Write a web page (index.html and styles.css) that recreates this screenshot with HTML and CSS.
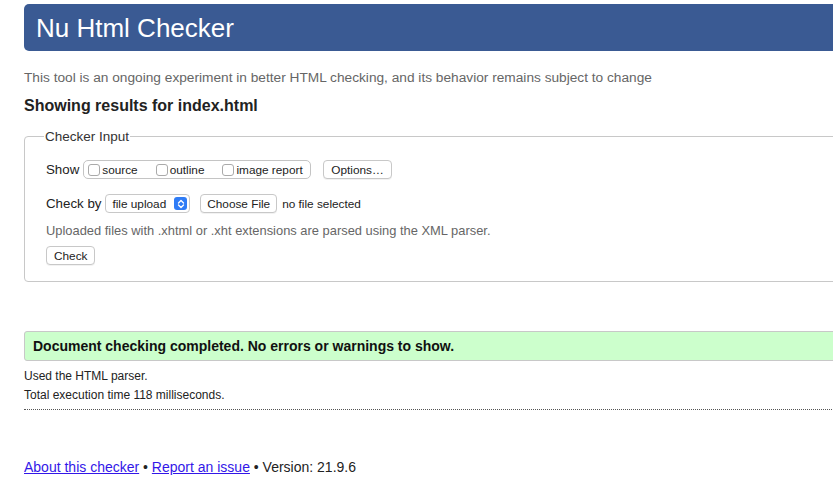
FILE: index.html
```html
<!DOCTYPE html>
<html lang="en">
<head>
<meta charset="utf-8">
<title>Nu Html Checker</title>
<link rel="stylesheet" href="styles.css">
</head>
<body>
<div class="page">
  <h1 class="banner">Nu Html Checker</h1>
  <p class="intro">This tool is an ongoing experiment in better HTML checking, and its behavior remains subject to change</p>
  <h2 class="results-for">Showing results for index.html</h2>
  <fieldset class="checker">
    <legend>Checker Input</legend>
    <div class="row show-row">
      <span class="label">Show</span>
      <span class="group">
        <label class="opt"><span class="box"></span>source</label>
        <label class="opt"><span class="box"></span>outline</label>
        <label class="opt"><span class="box"></span>image report</label>
      </span>
      <span class="btn">Options…</span>
    </div>
    <div class="row by-row">
      <span class="label">Check by</span>
      <span class="select">file upload<span class="arrows"><svg width="8" height="10" viewBox="0 0 8 10"><path d="M1.5 4 L4 1.5 L6.5 4 M1.5 6 L4 8.5 L6.5 6" fill="none" stroke="#fff" stroke-width="1.4" stroke-linecap="round" stroke-linejoin="round"/></svg></span></span>
      <span class="btn file-btn">Choose File</span>
      <span class="nofile">no file selected</span>
    </div>
    <p class="note">Uploaded files with .xhtml or .xht extensions are parsed using the XML parser.</p>
    <span class="btn check-btn">Check</span>
  </fieldset>
  <p class="success">Document checking completed. No errors or warnings to show.</p>
  <p class="detail">Used the HTML parser.</p>
  <p class="detail">Total execution time 118 milliseconds.</p>
  <hr class="dotted">
  <p class="footer"><a href="#">About this checker</a> • <a href="#">Report an issue</a> • Version: 21.9.6</p>
</div>
</body>
</html>
```
FILE: styles.css
```css
html, body {
  margin: 0;
  padding: 0;
  overflow: hidden;
  background: #fff;
}
body {
  font-family: "Liberation Sans", Arial, sans-serif;
  color: #222;
}
.page {
  width: 900px;
  padding: 4px 0 0 24px;
}
.banner {
  margin: 0;
  height: 47px;
  background: #3a5a93;
  color: #fff;
  font-weight: normal;
  font-size: 26px;
  line-height: 48px;
  padding-left: 12px;
  border-radius: 5px;
}
.intro {
  margin: 18px 0 0;
  font-size: 13.7px;
  line-height: 18px;
  color: #666;
}
.results-for {
  margin: 9px 0 0;
  font-size: 16px;
  line-height: 20px;
  font-weight: bold;
  color: #222;
}
.checker {
  margin: 13px 0 0;
  padding: 4px 20px 16px 21px;
  border: 1px solid #c8c8c8;
  border-radius: 4px;
  font-size: 13px;
}
.checker legend {
  padding: 0 1px;
  margin-left: -2px;
  font-size: 13.5px;
  color: #333;
}
.row {
  display: flex;
  align-items: center;
}
.show-row {
  margin-top: 12px;
}
.label {
  font-size: 13.3px;
  color: #222;
  margin-right: 4px;
}
.group {
  display: flex;
  align-items: center;
  height: 17px;
  width: 222px;
  border: 1px solid #c4c4c4;
  border-radius: 5px;
  padding: 0 0 0 4px;
  font-size: 11.8px;
  color: #222;
  margin-right: 12px;
}
.opt {
  display: flex;
  align-items: center;
  margin-right: 18px;
}
.opt:last-child {
  margin-right: 0;
}
.box {
  display: inline-block;
  width: 12px;
  height: 12px;
  border: 1px solid #aaa;
  border-radius: 3px;
  margin-right: 2px;
  box-sizing: border-box;
}
.btn {
  display: inline-flex;
  align-items: center;
  justify-content: center;
  height: 17px;
  padding: 0 7px;
  border: 1px solid #c8c8c8;
  border-radius: 4px;
  font-size: 11.8px;
  color: #222;
  background: #fff;
  box-shadow: 0 1px 0 rgba(0,0,0,0.05);
}
.by-row {
  margin-top: 15px;
}
.select {
  display: inline-flex;
  align-items: center;
  height: 17px;
  padding: 0 2px 0 6px;
  border: 1px solid #c8c8c8;
  border-radius: 4px;
  font-size: 11.8px;
  color: #222;
  margin-right: 10px;
}
.arrows {
  display: inline-flex;
  align-items: center;
  justify-content: center;
  width: 13px;
  height: 13px;
  background: #2f7cf6;
  border-radius: 3px;
  margin-left: 8px;
}
.file-btn {
  padding: 0 6px;
  margin-right: 5px;
}
.nofile {
  font-size: 11.8px;
  color: #222;
}
.note {
  margin: 10px 0 0;
  font-size: 12.9px;
  line-height: 16px;
  color: #666;
}
.check-btn {
  margin-top: 7px;
}
.success {
  margin: 49px 0 0;
  height: 28px;
  line-height: 29px;
  background: #ccffcc;
  border: 1px solid #c8c8c8;
  border-radius: 3px;
  padding-left: 8px;
  font-size: 14px;
  font-weight: bold;
  color: #111;
}
.detail {
  margin: 8px 0 0;
  font-size: 12px;
  line-height: 14px;
  color: #222;
}
.detail + .detail {
  margin-top: 5px;
}
.dotted {
  margin: 7px 0 0;
  border: 0;
  border-top: 1px dotted #555;
  height: 0;
}
.footer {
  margin: 49px 0 0;
  font-size: 14px;
  color: #222;
}
.footer a {
  color: #3317e8;
}
```
